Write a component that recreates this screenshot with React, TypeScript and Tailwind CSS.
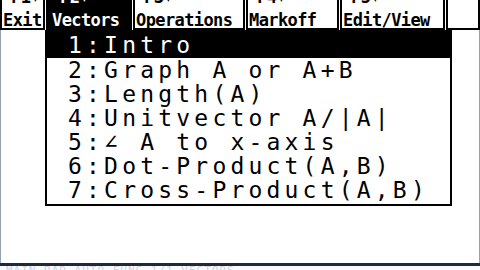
import React from "react";

const tabs = [
  { key: "F1", label: "Exit", w: "w-[45px]", active: false },
  { key: "F2", label: "Vectors", w: "w-[86px]", active: true },
  { key: "F3", label: "Operations", w: "w-[112px]", active: false },
  { key: "F4", label: "Markoff", w: "w-[93px]", active: false },
  { key: "F5", label: "Edit/View", w: "w-[105px]", active: false },
];

const items = [
  "2:Graph A or A+B",
  "3:Length(A)",
  "4:Unitvector A/|A|",
  "5:∠ A to x-axis",
  "6:Dot-Product(A,B)",
  "7:Cross-Product(A,B)",
];

const ti = { fontFamily: '"DejaVu Sans Mono", "Liberation Mono", monospace' };

export default function App() {
  return (
    <div
      className="w-[480px] h-[270px] bg-white overflow-hidden flex flex-col text-black"
      style={ti}
    >
      {/* toolbar */}
      <div className="flex h-[30px] shrink-0 gap-px">
        {tabs.map((t) => (
          <div
            key={t.key}
            className={
              t.w +
              " h-[30px] shrink-0 overflow-hidden " +
              (t.active
                ? "bg-black text-white pl-[6px]"
                : "bg-white border-2 border-t-0 border-black pl-[1px]")
            }
          >
            <div className="-mt-[14px] flex flex-col font-bold text-[17px] leading-[23px] tracking-[-0.6px] whitespace-nowrap">
              <span className="pl-[8px]">{t.key}▾</span>
              <span>{t.label}</span>
            </div>
          </div>
        ))}
        <div className="flex-1 h-[30px] border-2 border-t-0 border-black" />
      </div>

      {/* home screen area */}
      <div className="flex-1 border-x border-gray-400 pl-[44px]">
        <div className="w-[407px] h-[176px] bg-white border-2 border-t-0 border-black flex flex-col text-[23px] tracking-[4.2px] whitespace-nowrap">
          <div className="h-[28px] bg-black text-white pl-[21px] leading-[30px]">
            1:Intro
          </div>
          {items.map((it) => (
            <div key={it} className="h-[24px] pl-[21px] leading-[24px]">
              {it}
            </div>
          ))}
        </div>
      </div>

      {/* status line */}
      <div className="h-[3px] bg-gray-800 shrink-0" />
      <div className="h-[4px] overflow-hidden shrink-0 bg-gray-50">
        <div className="text-[11px] leading-[11px] -mt-[1px] text-gray-300 pl-[6px] whitespace-nowrap tracking-[1px]">
          MAIN RAD AUTO FUNC 1/1 VECTORS
        </div>
      </div>
    </div>
  );
}
